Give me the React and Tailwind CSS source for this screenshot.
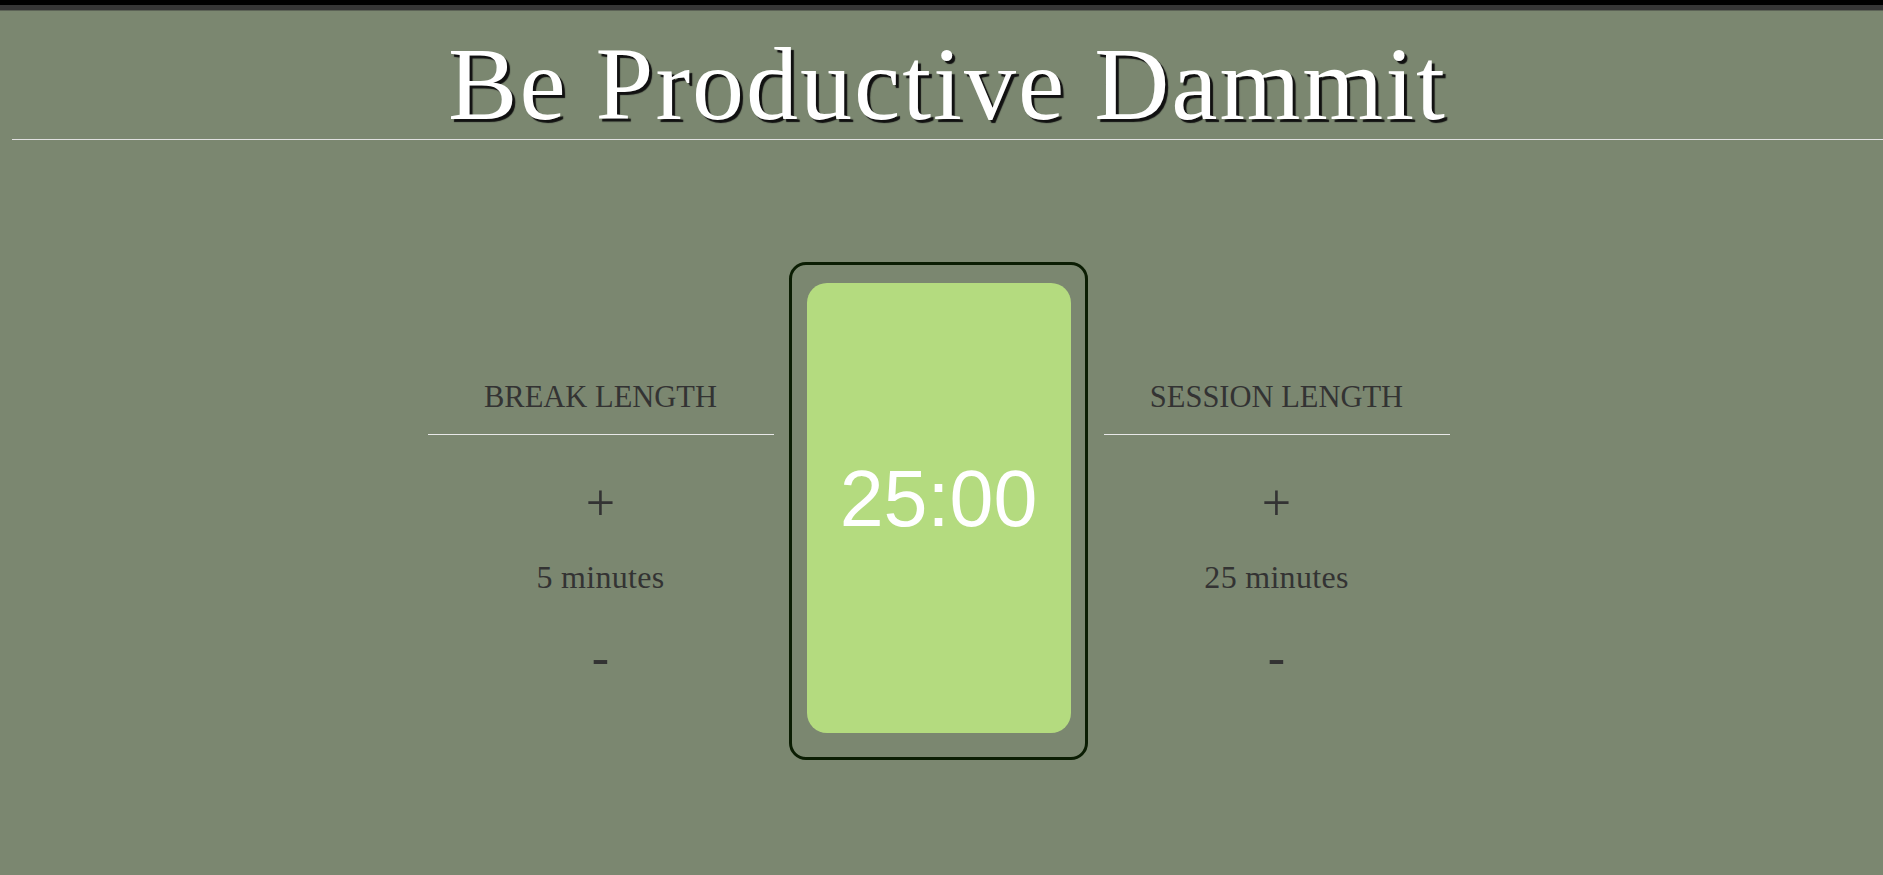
export default function App() {
  const serif = { fontFamily: '"Liberation Serif", "Times New Roman", serif' };
  const Column = ({ label, value }) => (
    <div className="w-[346px] flex flex-col items-stretch mt-[117px] text-[#333333]" style={serif}>
      <div className="text-center text-[30.5px] leading-[36px] pb-[19px] border-b border-[#e8e8e8]">{label}</div>
      <button className="mt-[42px] text-center text-[52px] leading-[52px] text-[#333333]" style={serif}>+</button>
      <div className="mt-[32px] text-center text-[32px] leading-[32px] tracking-[0.3px]">{value}</div>
      <button className="mt-[39px] text-center text-[52px] leading-[52px] text-[#333333]" style={serif}>-</button>
    </div>
  );
  return (
    <div className="min-h-[875px] w-full bg-[#7b8770] overflow-hidden">
      <div className="h-[5px] bg-black" />
      <div className="h-[5px] bg-[#363636]" />
      <div className="h-[1px] bg-[#5c6356]" />
      <div className="ml-[12px]">
        <h1
          className="mt-[21px] text-center text-white text-[104px] leading-[104px] tracking-[2px] [text-shadow:3px_3px_1px_#111]"
          style={serif}
        >
          Be Productive Dammit
        </h1>
        <div className="mt-[3px] h-[1px] bg-[#e0e0e0]" />
      </div>
      <div className="flex justify-center items-start pt-[122px] pr-[6px]">
        <Column label="BREAK LENGTH" value="5 minutes" />
        <div className="ml-[15px] mr-[16px] w-[299px] h-[498px] border-[3px] border-[#0b1d03] rounded-[17px] pt-[18px] pl-[15px] pr-[14px]">
          <div className="w-[264px] h-[450px] bg-[#b4db7f] rounded-[20px] pt-[176px]">
            <div
              className="text-center text-white text-[79px] leading-[79px]"
              style={{ fontFamily: '"Liberation Sans", Arial, sans-serif' }}
            >
              25:00
            </div>
          </div>
        </div>
        <Column label="SESSION LENGTH" value="25 minutes" />
      </div>
    </div>
  );
}
